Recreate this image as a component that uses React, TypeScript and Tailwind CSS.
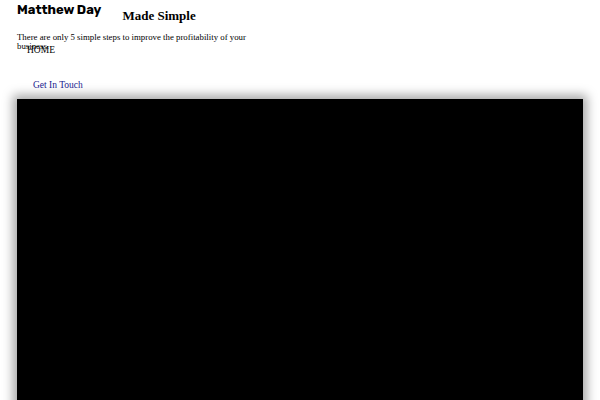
export default function App() {
  return (
    <div className="w-[600px] h-[400px] overflow-hidden bg-white font-['Liberation_Serif',serif] text-black">
      <div className="px-[17px]">
        <div className="flex items-start">
          <h1 className="font-['Rubik','Inter',sans-serif] font-bold text-[13px] leading-[18px] mt-[1px]">
            Matthew Day
          </h1>
          <h2 className="ml-[21px] mt-[8px] font-bold text-[13px] leading-[16px]">Made Simple</h2>
        </div>
        <p className="mt-[9px] w-[255px] h-[10px] text-[8.8px] leading-[9px]">
          There are only 5 simple steps to improve the profitability of your business.
        </p>
      </div>
      <nav className="pl-[27px] mt-[2px] text-[9.5px] leading-[10px]">
        <div>HOME</div>
        <a className="block mt-[25px] ml-[6px] text-[#1a1a8f]">Get In Touch</a>
      </nav>
      <div className="mx-[17px] mt-[9px] h-[310px] bg-black shadow-[0_0_10px_4px_rgba(0,0,0,0.35)]"></div>
    </div>
  );
}
